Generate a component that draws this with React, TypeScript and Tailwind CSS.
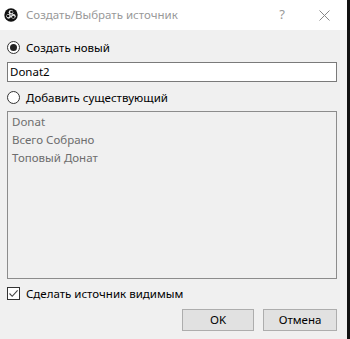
import React from "react";

const font = { fontFamily: '"Noto Sans", "Open Sans", Arial, sans-serif' };

function ObsLogo() {
  // rough OBS pinwheel: dark disc with three white rings
  const pts = [0, 120, 240].map((deg) => {
    const r = (deg - 90) * (Math.PI / 180);
    return { x: 7 + 2.7 * Math.cos(r), y: 7 + 2.7 * Math.sin(r), a: r };
  });
  return (
    <svg width="14" height="14" viewBox="0 0 14 14">
      <circle cx="7" cy="7" r="6.7" fill="#111" />
      {pts.map((p, i) => (
        <g key={i}>
          <circle cx={p.x} cy={p.y} r="2.3" fill="#eee" />
          <circle
            cx={p.x + 0.6 * Math.cos(p.a + 1)}
            cy={p.y + 0.6 * Math.sin(p.a + 1)}
            r="1.3"
            fill="#111"
          />
        </g>
      ))}
    </svg>
  );
}

function Radio({ checked, label }: { checked?: boolean; label: string }) {
  return (
    <div className="flex h-[13px] items-center gap-[6px]">
      <span className="flex size-[13px] items-center justify-center rounded-full border border-[#333] bg-white">
        {checked && <span className="size-[7px] rounded-full bg-[#222]" />}
      </span>
      <span className="text-[11.5px] leading-none text-black">{label}</span>
    </div>
  );
}

export default function App() {
  const sources = ["Donat", "Всего Собрано", "Топовый Донат"];
  return (
    <div className="flex h-[339px] w-[350px] overflow-hidden" style={font}>
      <div className="flex flex-1 flex-col bg-[#f0f0f0]">
        {/* Title bar */}
        <div className="flex h-[30px] items-center bg-white pl-[4px]">
          <ObsLogo />
          <span className="ml-[8px] text-[11.5px] text-[#999]">Создать/Выбрать источник</span>
          <span className="ml-auto mr-[34px] text-[13px] text-[#999]">?</span>
          <svg width="11" height="11" viewBox="0 0 11 11" className="mr-[17px]">
            <path d="M0.5 0.5 L10.5 10.5 M10.5 0.5 L0.5 10.5" stroke="#888" strokeWidth="1" />
          </svg>
        </div>

        {/* Body */}
        <div className="flex flex-1 flex-col pl-[7px] pr-[10px]">
          <div className="mt-[11px]">
            <Radio checked label="Создать новый" />
          </div>
          <div className="mt-[8px] flex h-[20px] items-center border border-[#7a7a7a] bg-white px-[2px] text-[11.5px] text-black">
            Donat2
          </div>
          <div className="mt-[9px]">
            <Radio label="Добавить существующий" />
          </div>
          <div className="mt-[7px] flex h-[168px] flex-col border border-[#8c8c8c] bg-[#f0f0f0] px-[4px] pt-[1px]">
            {sources.map((s) => (
              <div key={s} className="h-[18px] text-[11.5px] leading-[18px] text-[#6d6d6d]">
                {s}
              </div>
            ))}
          </div>
          <div className="mt-[8px] flex h-[13px] items-center gap-[6px]">
            <span className="flex size-[13px] items-center justify-center border border-[#333] bg-white">
              <svg width="11" height="11" viewBox="0 0 11 11">
                <path d="M1.5 5.5 L4.2 8.3 L9.6 2.4" fill="none" stroke="#444" strokeWidth="1.1" />
              </svg>
            </span>
            <span className="text-[11.5px] leading-none text-black">Сделать источник видимым</span>
          </div>
          <div className="mt-[9px] flex justify-end gap-[9px]">
            <button className="h-[22px] w-[72px] border border-[#adadad] bg-[#e1e1e1] text-[11.5px] text-black">
              OK
            </button>
            <button className="h-[22px] w-[74px] border border-[#adadad] bg-[#e1e1e1] text-[11.5px] text-black">
              Отмена
            </button>
          </div>
        </div>
      </div>
      <div className="w-[3px] bg-[#111]" />
    </div>
  );
}
